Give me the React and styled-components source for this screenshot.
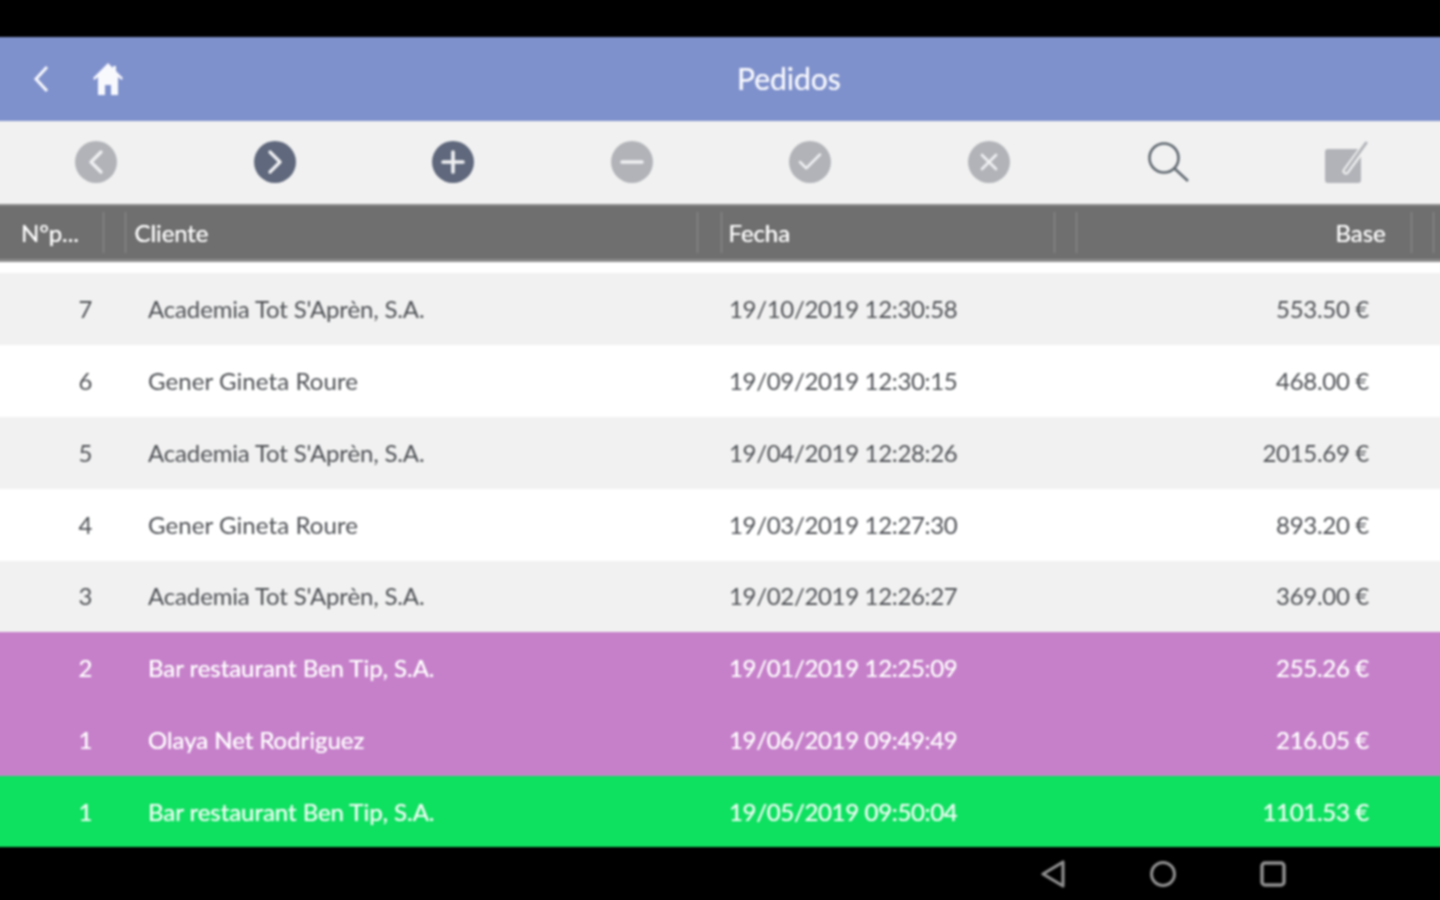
import React from 'react';
import styled, { createGlobalStyle } from 'styled-components';
import { ChevronLeft, ChevronRight, Plus, Minus, Check, X } from 'lucide-react';

const Global = createGlobalStyle`
  html, body { margin: 0; padding: 0; background: #000; }
  body { font-family: Lato, "Open Sans", sans-serif; }
`;

const Viewport = styled.div`
  width: 1440px;
  height: 900px;
  overflow: hidden;
  background: #000;
`;

/* 4px wider on each side so the soft blur never fades at the window edges */
const Screen = styled.div`
  width: 1448px;
  height: 900px;
  margin-left: -4px;
  background: #000;
  display: flex;
  flex-direction: column;
  padding-top: 37px;
  box-sizing: border-box;
  filter: blur(0.8px);
`;

const TopBar = styled.header`
  height: 84px;
  flex: none;
  background: #7f91cc;
  display: flex;
  align-items: center;
  position: relative;
  padding-left: 37px;
  gap: 44px;
  color: #fff;
`;

const TitleText = styled.h1`
  position: absolute;
  left: 741px;
  top: 21px;
  margin: 0;
  font-size: 30px;
  line-height: 40px;
  font-weight: 400;
  color: #f8f9fd;
  text-shadow: 0 0 0.6px currentColor;
`;

const Toolbar = styled.div`
  height: 83px;
  flex: none;
  background: #f1f1f1;
  display: grid;
  grid-template-columns: repeat(8, 178.6px);
  padding: 0 0 2px 10.7px;
  box-sizing: border-box;
  align-items: center;
  justify-items: center;
`;

const RoundIcon = styled.span`
  width: 42px;
  height: 42px;
  border-radius: 50%;
  background: ${p => (p.$active ? '#5f687c' : '#b1b3b8')};
  color: #eff0f2;
  display: flex;
  align-items: center;
  justify-content: center;
`;

const HeadRow = styled.div`
  height: 58px;
  flex: none;
  background: #6f6f6f;
  border-top: 2px solid #8a8a8a;
  border-bottom: 3px solid #8c8c8c;
  box-sizing: border-box;
  display: grid;
  grid-template-columns: 108px 22px 572px 24px 333px 22px 335px 22px 10px;
  align-items: stretch;
  color: #ffffff;
  font-size: 24px;
  letter-spacing: -0.1px;
  text-shadow: 0 0 0.6px currentColor;
`;

const HeadCell = styled.div`
  display: flex;
  align-items: center;
  justify-content: ${p => (p.$right ? 'flex-end' : 'flex-start')};
  padding: ${p => (p.$right ? '0 25.5px 0 0' : `0 0 0 ${p.$pad || 0}px`)};
  border-right: 1px solid ${p => (p.$noLine ? 'transparent' : '#8e8e8e')};
  margin: 6px 0;
  white-space: nowrap;
`;

const Gap = styled.div`
  height: 11px;
  flex: none;
  background: #fff;
`;

const Row = styled.div`
  flex: none;
  height: ${p => p.$h}px;
  padding-bottom: ${p => (p.$heavy ? 0 : 2)}px;
  box-sizing: border-box;
  background: ${p => p.$bg};
  color: ${p => p.$fg};
  display: grid;
  grid-template-columns: 152px 581px 400px 240px;
  align-items: center;
  font-size: 24px;
  text-shadow: ${p => p.$shadow};
  white-space: nowrap;
`;

const NumCell = styled.div`
  padding-left: 27px;
  text-align: center;
`;

const ClientCell = styled.div`
  letter-spacing: ${p => p.$spacing}px;
`;

const DateCell = styled.div`
  letter-spacing: -0.33px;
`;

const AmountCell = styled.div`
  text-align: right;
  letter-spacing: -0.3px;
`;

const NavBar = styled.nav`
  flex: 1;
  background: #000;
  display: flex;
  justify-content: flex-end;
  align-items: center;
  padding-right: 158px;
  gap: 84px;
`;

const rows = [
  ['7', "Academia Tot S'Aprèn, S.A.", '19/10/2019 12:30:58', '553.50 €', 'grey'],
  ['6', 'Gener Gineta Roure', '19/09/2019 12:30:15', '468.00 €', 'white'],
  ['5', "Academia Tot S'Aprèn, S.A.", '19/04/2019 12:28:26', '2015.69 €', 'grey'],
  ['4', 'Gener Gineta Roure', '19/03/2019 12:27:30', '893.20 €', 'white'],
  ['3', "Academia Tot S'Aprèn, S.A.", '19/02/2019 12:26:27', '369.00 €', 'grey'],
  ['2', 'Bar restaurant Ben Tip, S.A.', '19/01/2019 12:25:09', '255.26 €', 'purple'],
  ['1', 'Olaya Net Rodriguez', '19/06/2019 09:49:49', '216.05 €', 'purple'],
  ['1', 'Bar restaurant Ben Tip, S.A.', '19/05/2019 09:50:04', '1101.53 €', 'green'],
];

const tones = {
  grey: { bg: '#f1f1f1', fg: '#4e5155', shadow: 'none' },
  white: { bg: '#ffffff', fg: '#4e5155', shadow: 'none' },
  purple: { bg: '#c680ca', fg: '#ffffff', shadow: '0 0 0.6px currentColor' },
  green: { bg: '#0ee060', fg: '#eefcf3', shadow: '0 0 1px currentColor', heavy: true },
};

const heights = [72, 72, 72, 72, 71, 72, 72, 71];

const clientSpacing = name => {
  if (name.startsWith('Academia')) return -0.15;
  if (name.startsWith('Gener')) return 0.08;
  return -0.04;
};

const BackIcon = () => (
  <svg width="16" height="28" viewBox="0 0 16 28" fill="none" stroke="#f8f9fd" strokeWidth="3">
    <path d="M14 2 L3 14 L14 26" />
  </svg>
);

const HomeIcon = () => (
  <svg width="30" height="32" viewBox="0 0 30 32" fill="#f8f9fd">
    <path d="M15 0 L20 5 V3 H23 V8 L30 15 L28.5 17 L25 14 V32 H18 V22 H12 V32 H5 V14 L1.5 17 L0 15 Z" />
  </svg>
);

const SearchIcon = () => (
  <svg width="42" height="42" viewBox="0 0 42 42" fill="none" stroke="#616a72" strokeWidth="2.6">
    <circle cx="17" cy="17" r="14.5" />
    <path d="M27.5 27.5 L41 40" />
  </svg>
);

const EditIcon = () => (
  <svg width="44" height="44" viewBox="0 0 44 44" fill="none" strokeLinecap="round">
    <rect x="1" y="9" width="36" height="34" rx="3" fill="#b1b3b8" />
    <path d="M22 31 L42 4" stroke="#f1f1f1" strokeWidth="7" />
    <path d="M22 31 L42 3" stroke="#b1b3b8" strokeWidth="3" />
  </svg>
);

const NavBack = () => (
  <svg width="26" height="28" viewBox="0 0 26 28" fill="none" stroke="#8f8f8f" strokeWidth="3.2" strokeLinejoin="round">
    <path d="M23 2 V26 L3 14 Z" />
  </svg>
);
const NavHome = () => (
  <svg width="26" height="26" viewBox="0 0 26 26" fill="none" stroke="#8f8f8f" strokeWidth="3">
    <circle cx="13" cy="13" r="11.5" />
  </svg>
);
const NavRecent = () => (
  <svg width="26" height="26" viewBox="0 0 26 26" fill="none" stroke="#8f8f8f" strokeWidth="3.5">
    <rect x="2" y="2" width="22" height="22" rx="3" />
  </svg>
);

export default function App() {
  return (
    <Viewport>
      <Global />
      <Screen>
        <TopBar>
          <BackIcon />
          <HomeIcon />
          <TitleText>Pedidos</TitleText>
        </TopBar>
        <Toolbar>
          <RoundIcon><ChevronLeft size={40} strokeWidth={2} /></RoundIcon>
          <RoundIcon $active><ChevronRight size={40} strokeWidth={2} /></RoundIcon>
          <RoundIcon $active><Plus size={34} strokeWidth={2.6} /></RoundIcon>
          <RoundIcon><Minus size={34} strokeWidth={2.6} /></RoundIcon>
          <RoundIcon><Check size={30} strokeWidth={2} /></RoundIcon>
          <RoundIcon><X size={28} strokeWidth={2.3} /></RoundIcon>
          <SearchIcon />
          <EditIcon />
        </Toolbar>
        <HeadRow>
          <HeadCell $pad={25}>Nºp...</HeadCell>
          <HeadCell />
          <HeadCell $pad={8.5}>Cliente</HeadCell>
          <HeadCell />
          <HeadCell $pad={6.5}>Fecha</HeadCell>
          <HeadCell />
          <HeadCell $right>Base</HeadCell>
          <HeadCell />
          <HeadCell $noLine />
        </HeadRow>
        <Gap />
        {rows.map((r, i) => {
          const tone = tones[r[4]];
          return (
            <Row key={i} $h={heights[i]} $bg={tone.bg} $fg={tone.fg} $shadow={tone.shadow} $heavy={tone.heavy}>
              <NumCell>{r[0]}</NumCell>
              <ClientCell $spacing={clientSpacing(r[1])}>{r[1]}</ClientCell>
              <DateCell>{r[2]}</DateCell>
              <AmountCell>{r[3]}</AmountCell>
            </Row>
          );
        })}
        <NavBar>
          <NavBack />
          <NavHome />
          <NavRecent />
        </NavBar>
      </Screen>
    </Viewport>
  );
}
